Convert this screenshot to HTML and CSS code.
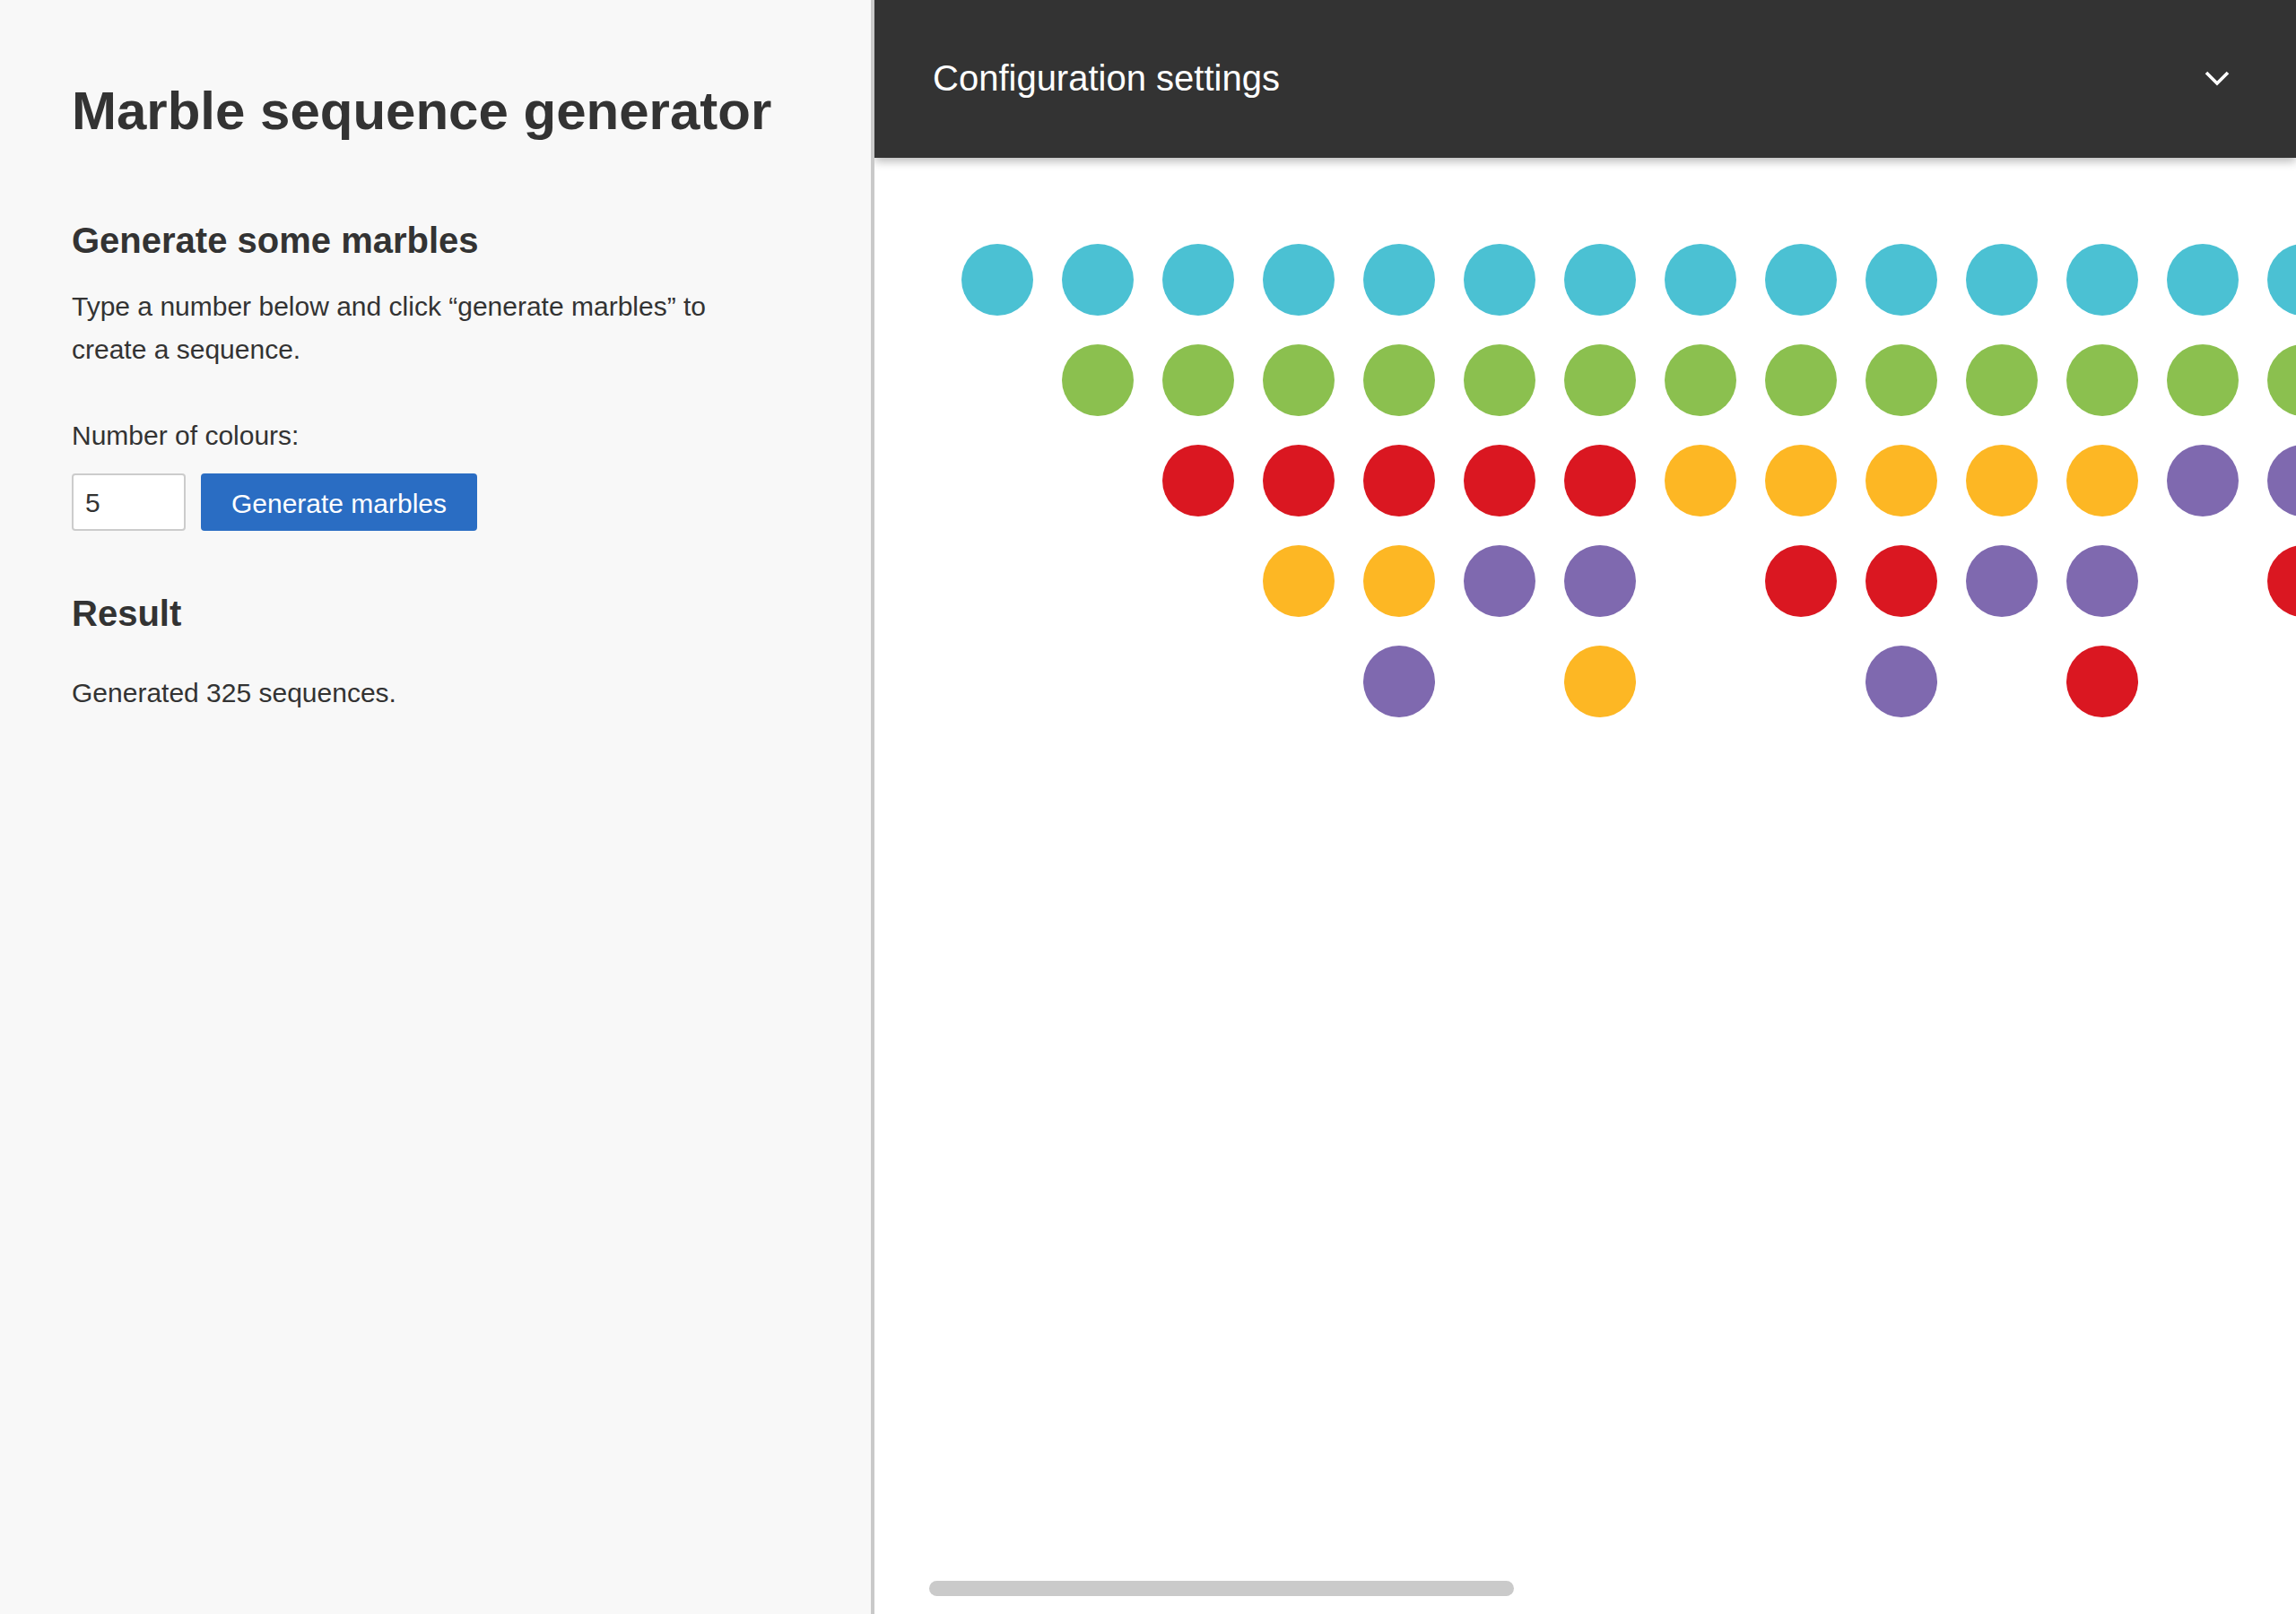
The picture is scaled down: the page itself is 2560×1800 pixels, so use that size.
FILE: index.html
```html
<!DOCTYPE html>
<html lang="en">
<head>
<meta charset="utf-8">
<title>Marble sequence generator</title>
<link rel="stylesheet" href="styles.css">
</head>
<body>
<aside class="sidebar">
  <h1 class="title">Marble sequence generator</h1>
  <h2 class="subtitle">Generate some marbles</h2>
  <p class="intro">Type a number below and click “generate marbles” to create a sequence.</p>
  <label class="field-label" for="count">Number of colours:</label>
  <div class="controls">
    <input id="count" class="count-input" type="text" value="5">
    <button class="generate-btn" type="button">Generate marbles</button>
  </div>
  <h2 class="result-title">Result</h2>
  <p class="result-text">Generated 325 sequences.</p>
</aside>
<main class="viewer">
  <header class="config-bar">
    <span class="config-title">Configuration settings</span>
    <svg class="chevron" width="28" height="18" viewBox="0 0 28 18" aria-hidden="true">
      <path d="M2 3 L14 15 L26 3" fill="none" stroke="#ffffff" stroke-width="3.6"/>
    </svg>
  </header>
  <div class="marble-area">
    <div class="marble-grid">
      <span class="m c"></span><span class="m c"></span><span class="m c"></span><span class="m c"></span><span class="m c"></span><span class="m c"></span><span class="m c"></span><span class="m c"></span><span class="m c"></span><span class="m c"></span><span class="m c"></span><span class="m c"></span><span class="m c"></span><span class="m c"></span>
      <span class="m"></span><span class="m g"></span><span class="m g"></span><span class="m g"></span><span class="m g"></span><span class="m g"></span><span class="m g"></span><span class="m g"></span><span class="m g"></span><span class="m g"></span><span class="m g"></span><span class="m g"></span><span class="m g"></span><span class="m g"></span>
      <span class="m"></span><span class="m"></span><span class="m r"></span><span class="m r"></span><span class="m r"></span><span class="m r"></span><span class="m r"></span><span class="m y"></span><span class="m y"></span><span class="m y"></span><span class="m y"></span><span class="m y"></span><span class="m p"></span><span class="m p"></span>
      <span class="m"></span><span class="m"></span><span class="m"></span><span class="m y"></span><span class="m y"></span><span class="m p"></span><span class="m p"></span><span class="m"></span><span class="m r"></span><span class="m r"></span><span class="m p"></span><span class="m p"></span><span class="m"></span><span class="m r"></span>
      <span class="m"></span><span class="m"></span><span class="m"></span><span class="m"></span><span class="m p"></span><span class="m"></span><span class="m y"></span><span class="m"></span><span class="m"></span><span class="m p"></span><span class="m"></span><span class="m r"></span><span class="m"></span><span class="m"></span>
    </div>
  </div>
  <div class="h-scroll-thumb"></div>
</main>
</body>
</html>
```

FILE: styles.css
```css
html, body {
  margin: 0;
  padding: 0;
  height: 100%;
}

body {
  display: flex;
  height: 1800px;
  overflow: hidden;
  font-family: "Liberation Sans", Arial, Helvetica, sans-serif;
  color: #333333;
  background: #ffffff;
}

.sidebar {
  flex: 0 0 975px;
  box-sizing: border-box;
  padding: 88px 80px 0 80px;
  background: #f8f8f8;
  border-right: 4px solid #c9c9c9;
  display: flex;
  flex-direction: column;
  align-items: flex-start;
}

.title {
  margin: 0;
  font-size: 60px;
  line-height: 72px;
  font-weight: 700;
  color: #333333;
}

.subtitle {
  margin: 84px 0 0 0;
  font-size: 40px;
  line-height: 48px;
  font-weight: 700;
}

.intro {
  margin: 26px 0 0 0;
  max-width: 760px;
  font-size: 30px;
  line-height: 48px;
}

.field-label {
  margin-top: 48px;
  font-size: 30px;
  line-height: 48px;
}

.controls {
  margin-top: 18px;
  display: flex;
  gap: 17px;
}

.count-input {
  box-sizing: border-box;
  width: 127px;
  height: 64px;
  margin: 0;
  padding: 2px 0 0 13px;
  border: 2px solid #cccccc;
  border-radius: 4px;
  background: #ffffff;
  font-family: "Liberation Sans", Arial, Helvetica, sans-serif;
  font-size: 30px;
  color: #333333;
  outline: none;
}

.generate-btn {
  box-sizing: border-box;
  width: 308px;
  height: 64px;
  margin: 0;
  padding: 3px 0 0 0;
  border: none;
  border-radius: 4px;
  background: #2a6dc3;
  color: #ffffff;
  font-family: "Liberation Sans", Arial, Helvetica, sans-serif;
  font-size: 30px;
}

.result-title {
  margin: 68px 0 0 0;
  font-size: 40px;
  line-height: 48px;
  font-weight: 700;
}

.result-text {
  margin: 41px 0 0 0;
  font-size: 30px;
  line-height: 48px;
}

.viewer {
  flex: 1 1 auto;
  position: relative;
  display: flex;
  flex-direction: column;
  min-width: 0;
  overflow: hidden;
  background: #ffffff;
}

.config-bar {
  flex: 0 0 176px;
  box-sizing: border-box;
  display: flex;
  align-items: center;
  justify-content: space-between;
  padding: 0 74px 2px 65px;
  background: #333333;
  color: #ffffff;
  box-shadow: 0 4px 10px rgba(0, 0, 0, 0.28);
  position: relative;
  z-index: 1;
}

.config-title {
  font-size: 40px;
  line-height: 48px;
  font-weight: 400;
}

.chevron {
  display: block;
  margin-top: 0;
}

.marble-area {
  flex: 1 1 auto;
  overflow: hidden;
  padding: 96px 0 0 97px;
}

.marble-grid {
  display: grid;
  grid-template-columns: repeat(14, 80px);
  grid-auto-rows: 80px;
  gap: 32px;
  width: max-content;
}

.m {
  display: block;
  width: 80px;
  height: 80px;
  border-radius: 50%;
}

.m.c { background: #4bc1d3; }
.m.g { background: #8bc04f; }
.m.r { background: #da1721; }
.m.y { background: #fdb724; }
.m.p { background: #7f69af; }

.h-scroll-thumb {
  position: absolute;
  left: 61px;
  bottom: 20px;
  width: 652px;
  height: 17px;
  border-radius: 9px;
  background: #cacaca;
}
```
